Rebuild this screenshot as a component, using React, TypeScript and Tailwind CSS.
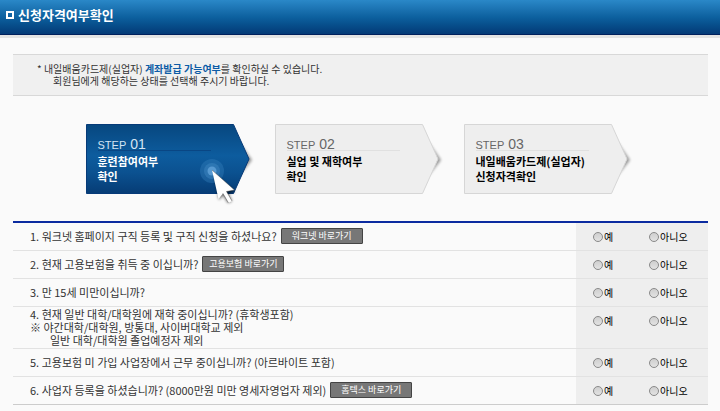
import { useState } from 'react';
import type { ReactNode } from 'react';

interface Step {
  number: string;
  lines: string[];
}

interface Question {
  id: number;
  text: string;
  notes?: ReactNode;
  link?: string;
}

const steps: Step[] = [
  { number: '01', lines: ['훈련참여여부', '확인'] },
  { number: '02', lines: ['실업 및 재학여부', '확인'] },
  { number: '03', lines: ['내일배움카드제(실업자)', '신청자격확인'] },
];

const questions: Question[] = [
  { id: 1, text: '워크넷 홈페이지 구직 등록 및 구직 신청을 하셨나요?', link: '워크넷 바로가기' },
  { id: 2, text: '현재 고용보험을 취득 중 이십니까?', link: '고용보험 바로가기' },
  { id: 3, text: '만 15세 미만이십니까?' },
  {
    id: 4,
    text: '현재 일반 대학/대학원에 재학 중이십니까? (휴학생포함)',
    notes: (
      <>
        <p>※ 야간대학/대학원, 방통대, 사이버대학교 제외</p>
        <p className="pl-5">일반 대학/대학원 졸업예정자 제외</p>
      </>
    ),
  },
  { id: 5, text: '고용보험 미 가입 사업장에서 근무 중이십니까? (아르바이트 포함)' },
  { id: 6, text: '사업자 등록을 하셨습니까? (8000만원 미만 영세자영업자 제외)', link: '홈텍스 바로가기' },
];

function StepShape({ active }: { active: boolean }) {
  return (
    <svg viewBox="0 0 164 80" className="col-start-1 row-start-1 w-full overflow-visible" aria-hidden="true">
      <defs>
        <linearGradient id="activeFill" x1="0" y1="0" x2="0" y2="1">
          <stop offset="0" stopColor="#07477f" />
          <stop offset="0.45" stopColor="#0d5c9e" />
          <stop offset="0.7" stopColor="#0b5190" />
          <stop offset="1" stopColor="#063c75" />
        </linearGradient>
        <filter id="soft" x="-50%" y="-50%" width="200%" height="200%">
          <feGaussianBlur stdDeviation="1.5" />
        </filter>
      </defs>
      <path d="M154 19 L166 36 L154 51 Z" fill="#000" opacity="0.4" filter="url(#soft)" />
      <path
        d="M0.5 0.5 H147.5 L163 35 L147.5 69.5 H0.5 Z"
        fill={active ? 'url(#activeFill)' : '#eeeeee'}
        stroke={active ? '#063a78' : '#d6d6d6'}
      />
      <path d="M12 26.5 H125" stroke={active ? '#094684' : '#e0e0e0'} />
      {active && (
        <>
          <circle cx="126" cy="47" r="12" fill="#3c86c2" opacity="0.35" />
          <circle cx="126" cy="47" r="8" fill="#4c94cf" opacity="0.35" />
          <circle cx="126" cy="47" r="4.5" fill="#6aaae0" opacity="0.7" />
          <path d="M128 50 L133 76 L137 71 L142 79 L146 77 L142 69 L149 68 Z" fill="#000" opacity="0.6" filter="url(#soft)" />
          <path d="M126 46 L132.5 75 L137 69.5 L142.5 79 L146 77 L140.5 67.5 L148.5 66 Z" fill="#fff" />
          <path d="M137 69.5 L142.5 79 M126 46 L148.5 66 L140.5 67.5 L146 77" fill="none" stroke="#3a3a3a" strokeWidth="0.7" opacity="0.6" />
        </>
      )}
    </svg>
  );
}

function StepCard({ step, active }: { step: Step; active: boolean }) {
  return (
    <li className="grid w-[164px]" aria-current={active ? 'step' : undefined}>
      <StepShape active={active} />
      <div className={`relative col-start-1 row-start-1 pl-3 pt-3 whitespace-nowrap ${active ? 'text-white' : 'text-black'}`}>
        <div className={`flex items-baseline gap-1 font-['Liberation_Sans',sans-serif] text-[11px] leading-[17px] ${active ? 'text-[#d4e4f4]' : 'text-[#666666]'}`}>
          STEP <span className="text-sm leading-[17px]">{step.number}</span>
        </div>
        <div className="text-[11px] leading-[15px] font-bold">
          {step.lines.map((line) => (
            <p key={line}>{line}</p>
          ))}
        </div>
      </div>
    </li>
  );
}

export default function App() {
  const [answers, setAnswers] = useState<Record<number, string>>({});

  return (
    <div className="min-h-screen bg-[#fafafa] font-['Noto_Sans_CJK_KR',sans-serif] text-[#333333]">
      <header className="flex h-[35px] items-center gap-1 border-b border-[#00205c] bg-linear-to-b from-[#2a88c8] via-[#0d619f] to-[#043a76] px-1.5 pb-1 shadow-[0_3px_0_#e3e3e3]">
        <span className="size-2 border-2 border-white" />
        <h1 className="text-[13px] leading-4 font-bold text-white">신청자격여부확인</h1>
      </header>

      <main className="pt-[19px] pr-3 pl-[13px]">
        <section className="border-y border-[#d8d8d8] bg-[#f0f0f0] py-2 pl-6 text-[10px] leading-3">
          <p>
            * 내일배움카드제(실업자) <strong className="text-[#0d5ca6]">계좌발급 가능여부</strong>를 확인하실 수 있습니다.
          </p>
          <p className="pl-4">회원님에게 해당하는 상태를 선택해 주시기 바랍니다.</p>
        </section>

        <ol className="flex justify-center gap-[25px] pt-7 pr-2">
          {steps.map((step, index) => (
            <StepCard key={step.number} step={step} active={index === 0} />
          ))}
        </ol>

        <table className="mt-[17px] w-full border-collapse border-t-2 border-b border-t-[#0b2ba0] border-b-[#cccccc] text-[11px] leading-[13px]">
          <tbody>
            {questions.map((question) => (
              <tr key={question.id} className="h-7 border-b border-[#e2e2e2] last:border-[#cccccc]">
                <th scope="row" className="py-px pl-[17px] text-left font-normal">
                  <div className="flex items-center gap-1">
                    <span id={`question-${question.id}`}>
                      {question.id}. {question.text}
                    </span>
                    {question.link && (
                      <a
                        href="#"
                        className="w-[82px] rounded-[1px] border border-[#444444] bg-[#777777] text-center text-[9px] leading-[14px] text-white"
                      >
                        {question.link}
                      </a>
                    )}
                  </div>
                  {question.notes}
                </th>
                <td className="w-[132px] bg-[#eeeeee] pt-2 align-top">
                  <div role="radiogroup" aria-labelledby={`question-${question.id}`} className="flex pl-[17px]">
                    {['예', '아니오'].map((option) => (
                      <label key={option} className="flex w-14 items-center gap-px text-[10px] leading-3 whitespace-nowrap text-black">
                        <input
                          type="radio"
                          name={`answer-${question.id}`}
                          value={option}
                          checked={answers[question.id] === option}
                          onChange={() => setAnswers({ ...answers, [question.id]: option })}
                          className="size-2.5 shrink-0 appearance-none rounded-full border border-[#8a8a8a] bg-linear-to-b from-[#cfcfcf] to-[#e2e2e2] checked:border-[3px] checked:border-[#555555]"
                        />
                        {option}
                      </label>
                    ))}
                  </div>
                </td>
              </tr>
            ))}
          </tbody>
        </table>
      </main>
    </div>
  );
}
